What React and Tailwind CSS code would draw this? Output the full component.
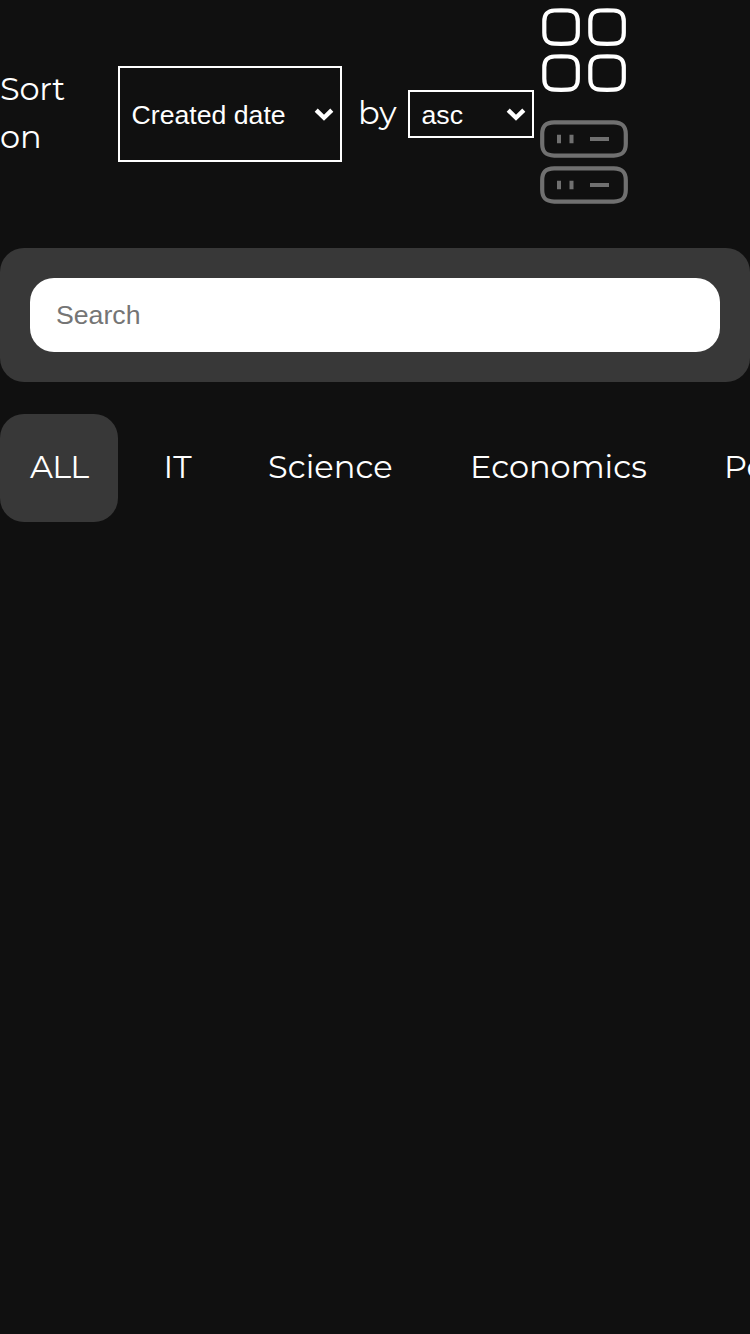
const categories = [
  { name: 'ALL', box: 'w-[118px] pl-[30px] rounded-3xl bg-[#383838] tracking-[-0.8px]' },
  { name: 'IT', box: 'w-[120px] pl-[45.500px]' },
  { name: 'Science', box: 'w-[203px] pl-[30px] tracking-[0.1px]' },
  { name: 'Economics', box: 'w-[254px] pl-[29px]' },
  { name: 'Politics', box: 'w-[200px] pl-[29px]' },
];

const gridCells = [[6, 10], [52, 10], [6, 56], [52, 56]];

function Chevron() {
  return (
    <svg className="mt-0.5 h-[14px] w-[20px] shrink-0" viewBox="0 0 20 14" fill="none" stroke="currentColor" strokeWidth="4.4">
      <path d="M2.200 2.200 10 9.800 17.800 2.200" />
    </svg>
  );
}

function GridIcon() {
  return (
    <svg className="block h-[92px] w-[92px]" viewBox="0 0 92 92" fill="none" stroke="#fff" strokeWidth="4.2">
      {gridCells.map(([x, y]) => (
        <path
          key={`${x}-${y}`}
          transform={`translate(${x + 0.3} ${y + 0.3})`}
          d="M0 11C0 3.500 3 .6 10 .2Q17-.1 23.500 .2C30.500 .6 33.500 3.500 33.500 11V22.500C33.500 30 30.500 33 23.500 33.400Q17 33.700 10 33.400C3 33 0 30 0 22.500Z"
        />
      ))}
    </svg>
  );
}

function ListIcon() {
  return (
    <svg className="block h-[92px] w-[92px]" viewBox="0 0 92 92" fill="none" stroke="#707070" strokeWidth="4.2">
      {[8, 54].map((y) => (
        <g key={y} transform={`translate(4.200 ${y + 0.2})`}>
          <path d="M0 12C0 3.500 3.500 .5 12 .2H71.600C80 .5 83.600 3.500 83.600 12V21.600C83.600 30 80 33.100 71.600 33.400H12C3.500 33.100 0 30 0 21.600Z" />
          <path strokeWidth="4" d="M14.800 12.500v8.500M27.300 12.500v8.500M45.800 16.800h19" transform="translate(2 0)" />
        </g>
      ))}
    </svg>
  );
}

export default function App() {
  return (
    <main className="min-h-screen w-full overflow-hidden bg-[#101010] text-white font-['Montserrat','Inter',sans-serif] font-normal">
      <header className="flex h-[216px] items-start">
        <div className="w-[118px] pt-[65px] text-[32px] leading-[48px]">
          <p className="tracking-[-0.3px]">Sort</p>
          <p>on</p>
        </div>
        <button className="mt-[66px] flex h-24 w-56 items-center justify-between border-2 border-white pl-[11.500px] pr-1.5 text-[26.667px] font-normal font-['Liberation_Sans',sans-serif]">
          <span className="mt-0.5">Created date</span>
          <Chevron />
        </button>
        <span className="mt-[89px] w-[66px] pl-4 text-[32px] leading-[48px]">by</span>
        <button className="mt-[90px] flex h-12 w-[126px] items-center justify-between border-2 border-white pl-[11.500px] pr-1.5 text-[26.667px] font-normal font-['Liberation_Sans',sans-serif]">
          <span className="mt-0.5">asc</span>
          <Chevron />
        </button>
        <div className="ml-1 flex flex-col gap-[22px]">
          <GridIcon />
          <ListIcon />
        </div>
      </header>
      <section className="mt-8 rounded-3xl bg-[#383838] p-[30px]">
        <input
          type="text"
          placeholder="Search"
          className="block h-[74px] w-full rounded-3xl bg-white px-[26px] text-[26.667px] font-normal text-black placeholder:text-[#757575] font-['Liberation_Sans',sans-serif]"
        />
      </section>
      <nav className="mt-8 flex h-[108px] overflow-hidden">
        {categories.map(({ name, box }) => (
          <button key={name} className={`flex h-[108px] shrink-0 items-center pb-0.5 text-[32px] ${box}`}>
            {name}
          </button>
        ))}
      </nav>
    </main>
  );
}
